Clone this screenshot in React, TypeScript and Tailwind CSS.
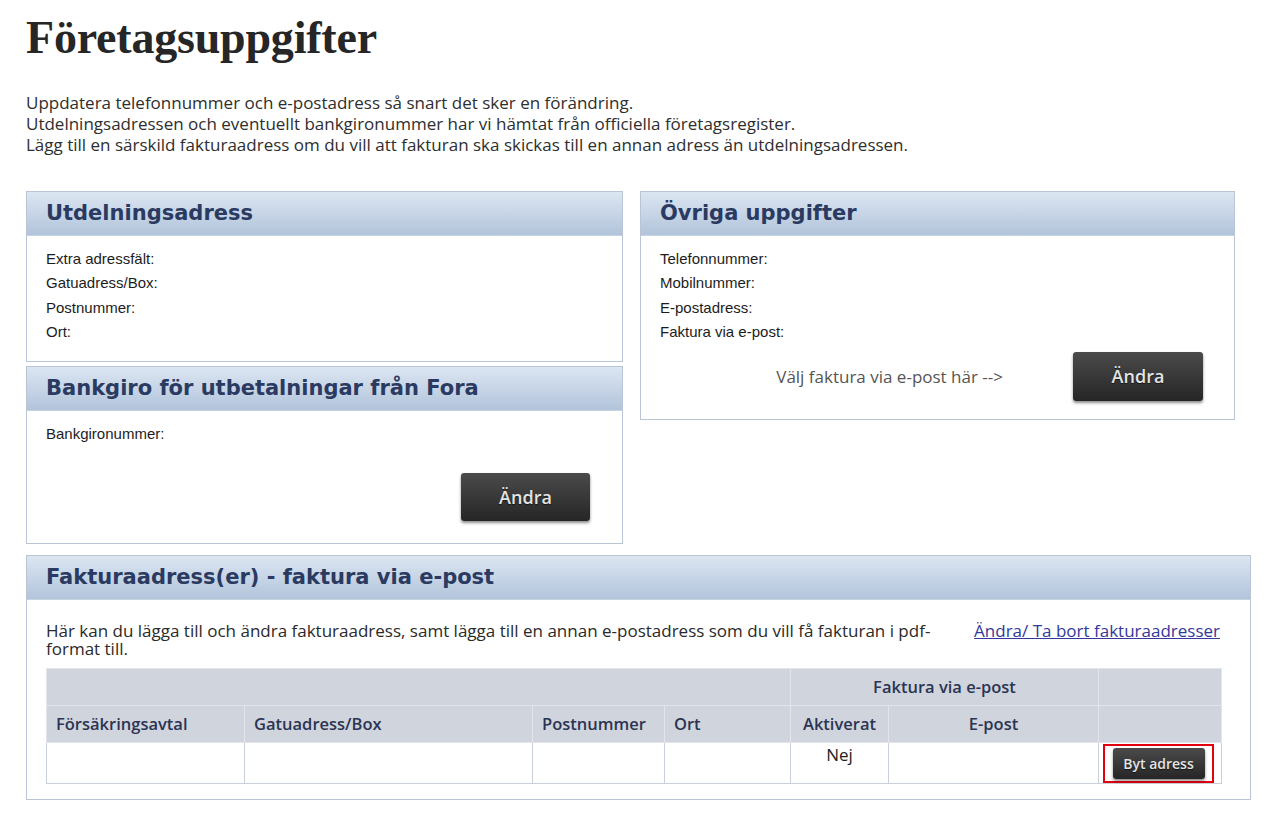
import React from "react";

const sans = "font-['Open_Sans','Noto_Sans',sans-serif]";

function Panel({
  title,
  className = "",
  children,
}: {
  title: string;
  className?: string;
  children: React.ReactNode;
}) {
  return (
    <section className={`border border-[#b9c5d5] bg-white ${className}`}>
      <div className="h-[44px] flex items-center px-[19px] bg-gradient-to-b from-[#dce6f2] to-[#b2c4db] border-b border-[#c8d3e0]">
        <h2 className="font-['DejaVu_Sans',sans-serif] font-bold text-[21px] text-[#2a3a60] leading-none">
          {title}
        </h2>
      </div>
      {children}
    </section>
  );
}

function DarkButton({ label, className = "" }: { label: string; className?: string }) {
  return (
    <button
      className={`rounded-[3px] bg-gradient-to-b from-[#4b4b4b] to-[#262626] text-[#e4e4e4] shadow-[0_2px_3px_rgba(0,0,0,0.45)] [text-shadow:0_1px_1px_rgba(0,0,0,0.6)] ${sans} font-semibold ${className}`}
    >
      {label}
    </button>
  );
}

function Labels({ items }: { items: string[] }) {
  return (
    <ul className="font-['Liberation_Sans',Arial,sans-serif] text-[15px] leading-[24.3px] text-[#1c1c1c]">
      {items.map((t) => (
        <li key={t}>{t}</li>
      ))}
    </ul>
  );
}

const th = "border border-[#e2e6ec] font-semibold text-[16.5px] text-[#2b3452] h-[37px]";

export default function App() {
  return (
    <main className="min-h-screen bg-white px-[26px] pt-[10px]">
      <h1 className="font-['Liberation_Serif',serif] font-bold text-[46px] leading-[56px] text-[#262626] tracking-[-0.2px]">
        Företagsuppgifter
      </h1>

      <div className={`${sans} text-[17px] leading-[21px] text-[#2e2e2e] mt-[26px]`}>
        <p>Uppdatera telefonnummer och e-postadress så snart det sker en förändring.</p>
        <p>Utdelningsadressen och eventuellt bankgironummer har vi hämtat från officiella företagsregister.</p>
        <p>Lägg till en särskild fakturaadress om du vill att fakturan ska skickas till en annan adress än utdelningsadressen.</p>
      </div>

      <div className="mt-[36px] w-[1209px] grid grid-cols-[597px_595px] gap-x-[17px] items-start">
        <div className="flex flex-col gap-[4px]">
          <Panel title="Utdelningsadress" className="h-[171px]">
            <div className="px-[19px] pt-[11px]">
              <Labels items={["Extra adressfält:", "Gatuadress/Box:", "Postnummer:", "Ort:"]} />
            </div>
          </Panel>
          <Panel title="Bankgiro för utbetalningar från Fora" className="h-[178px]">
            <div className="px-[19px] pt-[11px] pr-[32px]">
              <Labels items={["Bankgironummer:"]} />
              <div className="flex justify-end mt-[27px]">
                <DarkButton label="Ändra" className="w-[129px] h-[48px] text-[18px]" />
              </div>
            </div>
          </Panel>
        </div>

        <Panel title="Övriga uppgifter" className="h-[229px]">
          <div className="px-[19px] pt-[11px] pr-[31px]">
            <Labels items={["Telefonnummer:", "Mobilnummer:", "E-postadress:", "Faktura via e-post:"]} />
            <div className="flex items-center justify-end gap-[70px] mt-[8px]">
              <span className={`${sans} text-[17px] text-[#555]`}>Välj faktura via e-post här --&gt;</span>
              <DarkButton label="Ändra" className="w-[130px] h-[49px] text-[18px]" />
            </div>
          </div>
        </Panel>
      </div>

      <Panel title="Fakturaadress(er) - faktura via e-post" className="mt-[11px] w-[1225px] h-[245px]">
        <div className={`pl-[19px] pr-[30px] pt-[22px] ${sans}`}>
          <div className="flex items-start">
            <p className="w-[915px] text-[17px] leading-[18px] text-[#2a2a2a]">
              Här kan du lägga till och ändra fakturaadress, samt lägga till en annan e-postadress som du vill få fakturan i pdf-format till.
            </p>
            <a href="#" className="ml-auto text-[17px] leading-[18px] text-[#33399c] underline">
              Ändra/ Ta bort fakturaadresser
            </a>
          </div>

          <table className="mt-[10px] w-[1175px] border-collapse table-fixed border border-[#c9d0da]">
            <colgroup>
              <col className="w-[198px]" />
              <col className="w-[288px]" />
              <col className="w-[132px]" />
              <col className="w-[126px]" />
              <col className="w-[98px]" />
              <col className="w-[210px]" />
              <col className="w-[123px]" />
            </colgroup>
            <thead className="bg-[#d0d5dd]">
              <tr>
                <th colSpan={4} className={th}></th>
                <th colSpan={2} className={`${th} text-center`}>Faktura via e-post</th>
                <th className={th}></th>
              </tr>
              <tr>
                <th className={`${th} text-left px-[9px]`}>Försäkringsavtal</th>
                <th className={`${th} text-left px-[9px]`}>Gatuadress/Box</th>
                <th className={`${th} text-left px-[9px]`}>Postnummer</th>
                <th className={`${th} text-left px-[9px]`}>Ort</th>
                <th className={`${th} text-center`}>Aktiverat</th>
                <th className={`${th} text-center`}>E-post</th>
                <th className={th}></th>
              </tr>
            </thead>
            <tbody>
              <tr className="h-[40px] text-[17px] text-[#222]">
                <td className="border border-[#c9d0da]"></td>
                <td className="border border-[#c9d0da]"></td>
                <td className="border border-[#c9d0da]"></td>
                <td className="border border-[#c9d0da]"></td>
                <td className="border border-[#c9d0da] text-center align-top pt-0 leading-[24px]">Nej</td>
                <td className="border border-[#c9d0da]"></td>
                <td className="border border-[#c9d0da] p-0 align-top">
                  <div className="ml-[4px] mr-[7px] mt-[1px] h-[39px] border-2 border-[#e3000f] flex items-center justify-center">
                    <DarkButton label="Byt adress" className="w-[92px] h-[31px] text-[14px]" />
                  </div>
                </td>
              </tr>
            </tbody>
          </table>
        </div>
      </Panel>
    </main>
  );
}
